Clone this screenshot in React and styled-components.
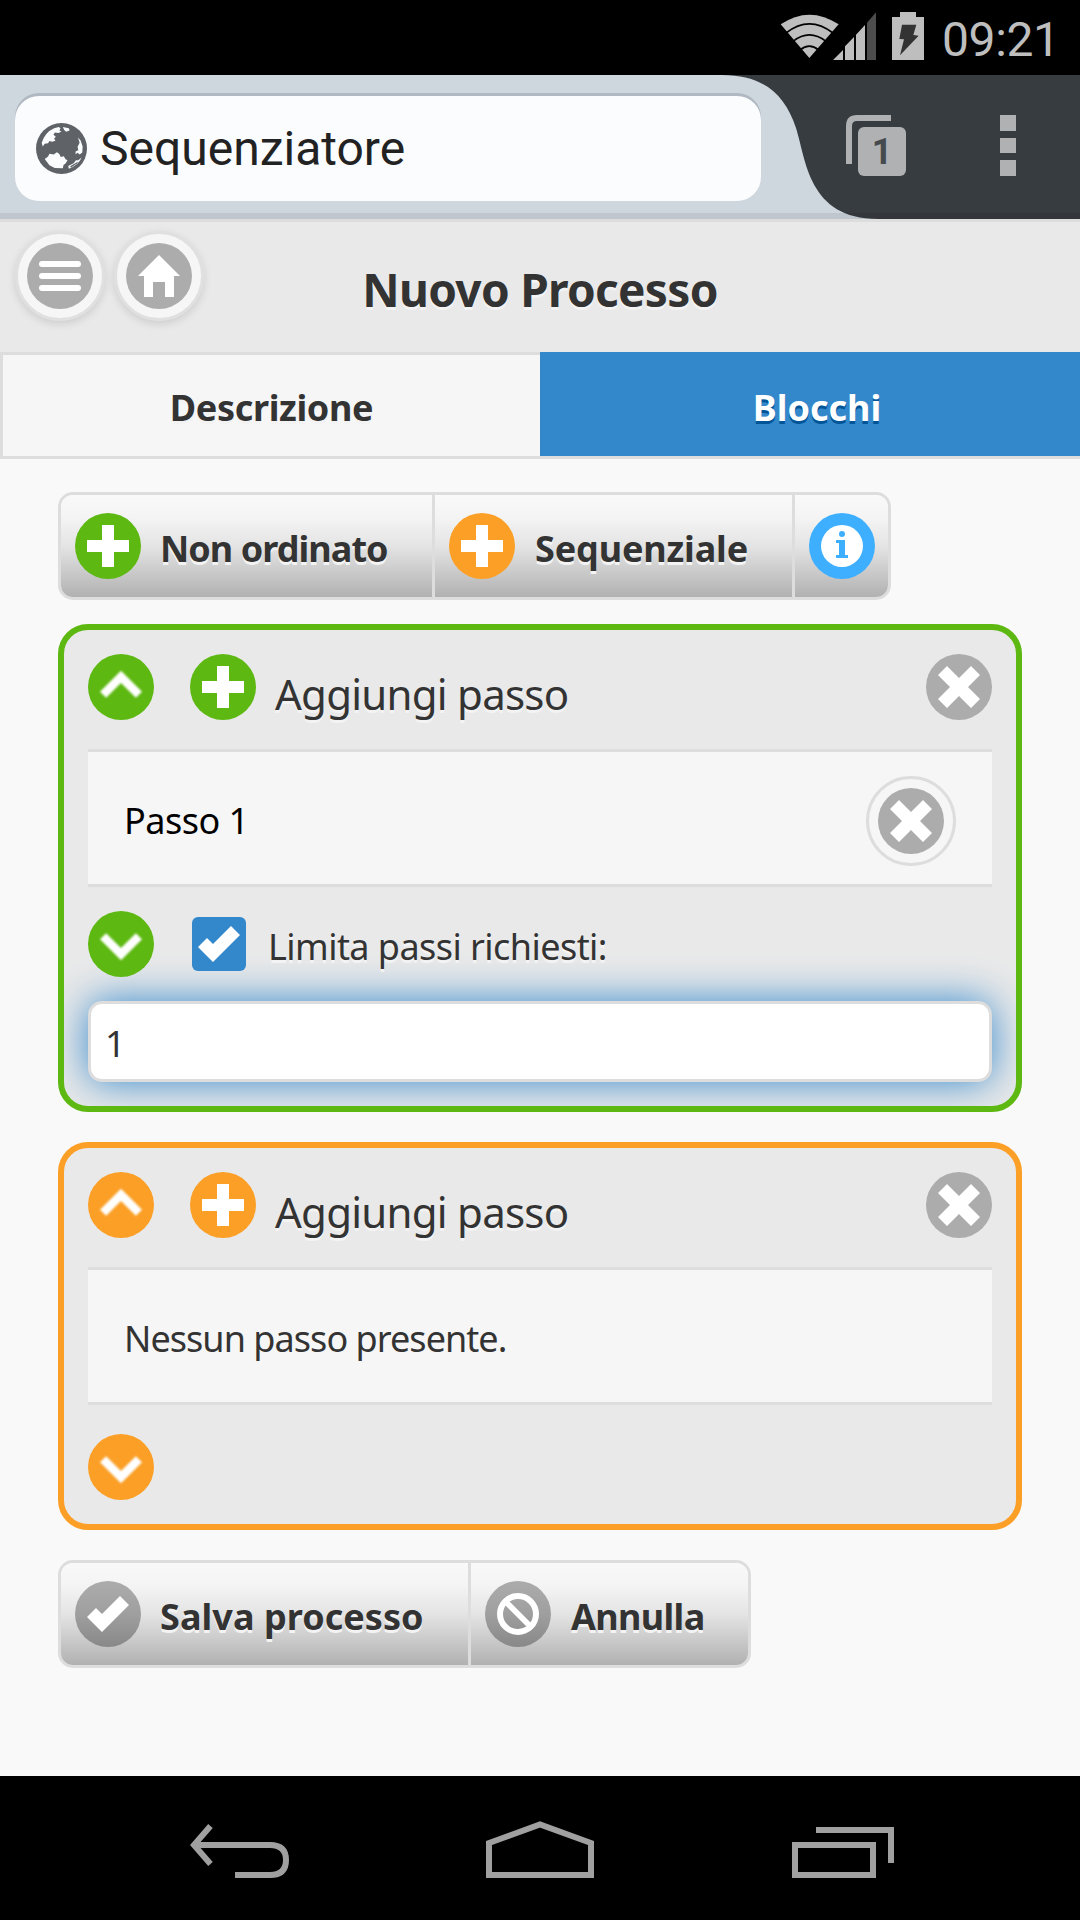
import React, { useState } from "react";
import styled, { createGlobalStyle, css } from "styled-components";

const GREEN = "#5db811";
const ORANGE = "#fb9f26";
const BLUE = "#3388cc";
const GREY = "#acacac";

const GlobalStyle = createGlobalStyle`
  * { box-sizing: border-box; }
  html, body { margin: 0; padding: 0; background: #000; }
  body { font-family: "Noto Sans", "Open Sans", sans-serif; color: #333; }
  button, input { font: inherit; color: inherit; border: 0; margin: 0; padding: 0; background: none; }
`;

const Screen = styled.div`
  width: 1080px;
  height: 1920px;
  display: flex;
  flex-direction: column;
  overflow: hidden;
`;

/* System status bar */
const StatusBar = styled.div`
  height: 75px;
  flex: none;
  background: #000;
  display: flex;
  justify-content: flex-end;
  padding: 12px 25px 0 0;
`;

const Clock = styled.span`
  font: 400 48px/56px Roboto, sans-serif;
  color: #bebebe;
  margin-left: 18px;
  width: 113px;
  white-space: nowrap;
  letter-spacing: -0.4px;
`;

/* Browser chrome */
const BrowserBar = styled.div`
  position: relative;
  height: 144px;
  flex: none;
  background: #373c40;
  display: flex;
  align-items: flex-start;
  padding: 21px 64px 0 15px;
`;

const TabShape = styled.svg`
  position: absolute;
  left: 0;
  top: 0;
`;

const Omnibox = styled.div`
  position: relative;
  width: 746px;
  height: 105px;
  border-radius: 24px;
  background: #fafcfe;
  box-shadow: 0 -3px 0 #b0b8c1;
  display: flex;
  align-items: center;
  padding-left: 21px;
`;

const PageName = styled.span`
  font: 400 48px/56px Roboto, sans-serif;
  color: #222;
  margin: 0 0 0 13px;
`;

const TabSwitcher = styled.div`
  position: relative;
  width: 61px;
  height: 61px;
  margin: 19px 0 0 85px;
  padding: 12px 0 0 12px;
`;

const TabBack = styled.svg`
  position: absolute;
  left: 0;
  top: 0;
`;

const TabCount = styled.div`
  width: 48px;
  height: 49px;
  border-radius: 6px;
  background: #afb1b3;
  color: #454a4f;
  font: 700 36px/50px Roboto, sans-serif;
  text-align: center;
`;

const Overflow = styled.div`
  margin: 19px 0 0 auto;
  display: flex;
  flex-direction: column;
  gap: 7px;
`;

const Dot = styled.i`
  display: block;
  width: 16px;
  height: 15.6px;
  background: #afb1b3;
`;

/* Page header */
const Header = styled.header`
  height: 133px;
  flex: none;
  border-top: 3px solid #ddd;
  background: #e9e9e9;
  display: grid;
  grid-template-columns: 204px 1fr 204px;
`;

const HeaderButtons = styled.div`
  display: flex;
  gap: 9px;
  padding: 9px 0 0 15px;
`;

const RoundButton = styled.button`
  width: 90px;
  height: 90px;
  border-radius: 50%;
  border: 3px solid #ddd;
  background: #f6f6f6;
  display: grid;
  place-items: center;
  flex: none;
  ${(p) => p.$raised && css`
    border-color: #e0e0e0;
    box-shadow: 0 3px 9px rgba(0, 0, 0, 0.12);
  `}
`;

const Title = styled.h1`
  margin: 2px 0 0;
  font-size: 46px;
  line-height: 130px;
  font-weight: 700;
  text-align: center;
  letter-spacing: -0.7px;
  white-space: nowrap;
  text-shadow: 0 3px 0 #f3f3f3;
`;

const Tabs = styled.nav`
  display: grid;
  grid-template-columns: 1fr 1fr;
  height: 107px;
  flex: none;
  border-bottom: 3px solid #ddd;
`;

const Tab = styled.button`
  padding-top: 5px;
  font-size: 36px;
  font-weight: 700;
  line-height: 50px;
  letter-spacing: ${(p) => p.$spacing || "0"};
  background: #f6f6f6;
  border: solid #ddd;
  border-width: 3px 0 0 3px;
  text-shadow: 0 3px 0 #f3f3f3;
  ${(p) => p.$active && css`
    padding-left: 11px;
    background: ${BLUE};
    border-color: ${BLUE};
    color: #fff;
    text-shadow: 0 3px 0 #005599;
  `}
`;

const Main = styled.main`
  flex: 1;
  background: #f9f9f9;
  padding: 33px 58px 0;
`;

/* Joined buttons */
const ButtonGroup = styled.div`
  display: flex;
  width: max-content;
  height: 108px;
  margin-top: ${(p) => p.$gap || 0}px;
  border: 3px solid #ddd;
  border-radius: 15px;
  overflow: hidden;
`;

const GroupButton = styled.button`
  width: ${(p) => p.$width}px;
  display: flex;
  align-items: center;
  padding-left: 14px;
  font-size: 36px;
  font-weight: 700;
  line-height: 50px;
  letter-spacing: ${(p) => p.$spacing || "0"};
  white-space: nowrap;
  text-shadow: 0 3px 0 #f3f3f3;
  background: linear-gradient(#f9f9f9 0%, #f4f4f4 22%, #e4e4e4 50%, #b1b1b1 100%);
  & + & { border-left: 3px solid #ddd; }
`;

const GroupLabel = styled.span`
  margin: 5px 0 0 ${(p) => p.$gap || 19}px;
`;

const Disc = styled.span`
  width: 66px;
  height: 66px;
  flex: none;
  border-radius: 50%;
  background: ${(p) => p.$color};
  display: grid;
  place-items: center;
`;

const Glyph = styled.svg`
  display: block;
  overflow: visible;
  fill: #fff;
  filter: ${(p) => (p.$soft ? "blur(0.8px)" : "none")};
`;

/* Process block */
const Block = styled.section`
  border: 6px solid ${(p) => p.$color};
  border-radius: 30px;
  background: #e9e9e9;
  padding: 24px;
  margin-top: ${(p) => p.$gap}px;
  height: ${(p) => p.$height}px;
  overflow: hidden;
`;

const BlockRow = styled.div`
  height: 66px;
  display: flex;
  align-items: center;
`;

const AddStep = styled.button`
  display: flex;
  align-items: center;
  margin-left: 36px;
  font-size: 42px;
  line-height: 56px;
  text-shadow: 0 3px 0 #f3f3f3;
`;

const AddLabel = styled.span`
  margin: 13px 0 0 19px;
  letter-spacing: -0.75px;
  white-space: nowrap;
`;

const Push = styled.span`
  margin-left: auto;
`;

const Steps = styled.div`
  height: 138px;
  margin: 29px 0 ${(p) => p.$after}px;
  padding: 5px 36px 0;
  border: solid #ddd;
  border-width: 3px 0;
  background: #f6f6f6;
  display: flex;
  align-items: center;
  justify-content: space-between;
  font-size: 36px;
  line-height: 50px;
  color: ${(p) => p.$ink};
  letter-spacing: ${(p) => p.$spacing};
`;

const Checkbox = styled.button`
  width: 54px;
  height: 54px;
  margin-left: 38px;
  border-radius: 6px;
  background: ${(p) => (p.$on ? BLUE : "#f6f6f6")};
  display: grid;
  place-items: center;
`;

const LimitLabel = styled.span`
  margin: 5px 0 0 22px;
  font-size: 36px;
  line-height: 50px;
  letter-spacing: -0.55px;
  text-shadow: 0 3px 0 #f3f3f3;
`;

const LimitInput = styled.input`
  display: block;
  width: 904px;
  height: 81px;
  margin-top: 24px;
  padding: 3px 14px 0;
  border: 3px solid #ddd;
  border-radius: 14px;
  background: #fff;
  font-size: 36px;
  outline: none;
  box-shadow: 0 0 40px ${BLUE};
`;

/* System navigation bar */
const NavBar = styled.footer`
  height: 144px;
  flex: none;
  background: #000;
  display: flex;
  padding: 45px 0 0 190px;
`;

const NavIcon = styled.svg`
  fill: none;
  stroke: #a0a0a0;
  stroke-width: 6;
  margin-left: ${(p) => p.$gap || 0}px;
`;

const shapes = {
  plus: <polygon points="14,5 9,5 9,0 5,0 5,5 0,5 0,9 5,9 5,14 9,14 9,9 14,9" />,
  remove: <polygon points="14,3 11,0 7,4 3,0 0,3 4,7 0,11 3,14 7,10 11,14 14,11 10,7" />,
  check: <polygon points="14,4 11,1 5,7 3,5 0,8 5,13" />,
  home: <polygon points="7,0 0,7 2,7 2,14 5,14 5,9 9,9 9,14 12,14 12,7 14,7" />,
  up: <polygon points="2.05,10.6 7,5.65 11.95,10.6 14,8.55 7,1.55 0,8.55" />,
  down: <polygon points="11.95,3.4 7,8.35 2.05,3.4 0,5.45 7,12.45 14,5.45" />,
  bars: (
    <>
      <rect y="2" width="14" height="2" rx="1" />
      <rect y="6" width="14" height="2" rx="1" />
      <rect y="10" width="14" height="2" rx="1" />
    </>
  ),
  info: (
    <>
      <circle cx="7" cy="7" r="7" />
      <g fill="#3eafff">
        <circle cx="7" cy="3" r="1" />
        <polygon points="5,5 8,5 8,10 9,10 9,11 5,11 5,10 6,10 6,6 5,6" />
      </g>
    </>
  ),
  forbidden: (
    <g fill="none" stroke="#fff" strokeWidth="2">
      <circle cx="7" cy="7" r="6" />
      <path d="M3 3L11 11" strokeWidth="1.9" />
    </g>
  ),
};

const Icon = ({ name }) => (
  <Glyph width="42" height="42" viewBox="0 0 14 14" $soft={name === "up" || name === "down"}>
    {shapes[name]}
  </Glyph>
);

const DiscIcon = ({ name, color = GREY }) => (
  <Disc $color={color}>
    <Icon name={name} />
  </Disc>
);

const StatusIcons = () => (
  <svg width="144" height="48" viewBox="180 36 432 144" fill="#bebebe">
    <path d="M182 73Q268 15 356 73L268 174Z" />
    <g fill="none" stroke="#000" strokeWidth="5">
      <path d="M198 99Q268 44 339 99" />
      <path d="M219 124Q268 85 318 124" />
      <path d="M240 150Q268 127 296 150" />
    </g>
    <path d="M339 180L369 150V180ZM375 180V139L402 111V180ZM408 180V104L435 75V180Z" />
    <path d="M441 180V68L468 37V180Z" fill="#4d4d4d" />
    <path d="M516 51H540V36H588V51H612V180H516Z" />
    <path d="M546 74H589L580 105L596 107L540 166L552 118L538 117Z" fill="#333" />
  </svg>
);

const Globe = () => (
  <svg width="51" height="51" viewBox="110 155 152 152">
    <circle cx="186" cy="231" r="76" fill="#5f6368" />
    <g fill="#fafcfe">
      <path d="M127 214Q138 182 164 171L178 167L183 171L180 177L186 181L176 185L166 183L162 190L169 196L164 202L168 208L158 211L150 209L146 215L136 217L130 225Z" />
      <path d="M136 262L146 255L150 247L163 249L172 242L179 247L184 256L193 254L198 263L204 266L198 276L192 280L190 290L166 289L150 281Z" />
      <path d="M190 167L208 171L210 177L200 181L194 176Z" />
      <path d="M235 198L243 207L249 225L248 243L240 249L234 244L228 248L228 240L236 236L234 226L240 214Z" />
      <path d="M208 291Q236 282 246 258L236 266L229 266L222 275L206 283Z" />
    </g>
    <g fill="#5f6368">
      <circle cx="185" cy="245" r="4" />
      <path d="M212 284L236 270L232 276L214 288Z" />
    </g>
  </svg>
);

function ProcessBlock({ color, gap, height, after, ink, spacing, children, footer }) {
  return (
    <Block $color={color} $gap={gap} $height={height}>
      <BlockRow>
        <DiscIcon name="up" color={color} />
        <AddStep>
          <DiscIcon name="plus" color={color} />
          <AddLabel>Aggiungi passo</AddLabel>
        </AddStep>
        <Push>
          <DiscIcon name="remove" />
        </Push>
      </BlockRow>
      <Steps $after={after} $ink={ink} $spacing={spacing}>{children}</Steps>
      {footer}
    </Block>
  );
}

export default function App() {
  const [limited, setLimited] = useState(true);
  const [limit, setLimit] = useState("1");

  return (
    <Screen>
      <GlobalStyle />
      <StatusBar>
        <StatusIcons />
        <Clock>09:21</Clock>
      </StatusBar>

      <BrowserBar>
        <TabShape width="1080" height="144" viewBox="0 0 1080 144">
          <path d="M0 0H722C764 0 785 20 796 53C806 84 808 144 878 144H0Z" fill="#ced6de" />
          <rect y="138" width="1080" height="6" fill="#000" opacity="0.07" />
        </TabShape>
        <Omnibox>
          <Globe />
          <PageName>Sequenziatore</PageName>
        </Omnibox>
        <TabSwitcher>
          <TabBack width="46" height="50" viewBox="0 0 46 50">
            <path d="M3 49V11Q3 3 11 3H45" fill="none" stroke="#afb1b3" strokeWidth="6" />
          </TabBack>
          <TabCount>1</TabCount>
        </TabSwitcher>
        <Overflow>
          <Dot />
          <Dot />
          <Dot />
        </Overflow>
      </BrowserBar>

      <Header>
        <HeaderButtons>
          <RoundButton $raised><DiscIcon name="bars" /></RoundButton>
          <RoundButton $raised><DiscIcon name="home" /></RoundButton>
        </HeaderButtons>
        <Title>Nuovo Processo</Title>
      </Header>
      <Tabs>
        <Tab $spacing="-0.35px">Descrizione</Tab>
        <Tab $active $spacing="0px">Blocchi</Tab>
      </Tabs>

      <Main>
        <ButtonGroup>
          <GroupButton $width={371} $spacing="-0.95px">
            <DiscIcon name="plus" color={GREEN} />
            <GroupLabel>Non ordinato</GroupLabel>
          </GroupButton>
          <GroupButton $width={360} $spacing="-0.15px">
            <DiscIcon name="plus" color={ORANGE} />
            <GroupLabel $gap={20}>Sequenziale</GroupLabel>
          </GroupButton>
          <GroupButton $width={96}>
            <DiscIcon name="info" color="#3eafff" />
          </GroupButton>
        </ButtonGroup>

        <ProcessBlock
          color={GREEN}
          gap={24}
          height={488}
          after={24}
          ink="#000"
          spacing="-0.5px"
          footer={
            <>
              <BlockRow>
                <DiscIcon name="down" color={GREEN} />
                <Checkbox $on={limited} onClick={() => setLimited(!limited)}>
                  {limited && <Icon name="check" />}
                </Checkbox>
                <LimitLabel>Limita passi richiesti:</LimitLabel>
              </BlockRow>
              <LimitInput value={limit} onChange={(e) => setLimit(e.target.value)} />
            </>
          }
        >
          Passo 1
          <RoundButton><DiscIcon name="remove" /></RoundButton>
        </ProcessBlock>

        <ProcessBlock
          color={ORANGE}
          gap={30}
          height={388}
          after={29}
          ink="#333"
          spacing="-0.95px"
          footer={
            <BlockRow>
              <DiscIcon name="down" color={ORANGE} />
            </BlockRow>
          }
        >
          Nessun passo presente.
        </ProcessBlock>

        <ButtonGroup $gap={30}>
          <GroupButton $width={407} $spacing="0.05px">
            <DiscIcon name="check" color="rgba(0,0,0,0.3)" />
            <GroupLabel>Salva processo</GroupLabel>
          </GroupButton>
          <GroupButton $width={280} $spacing="-0.65px">
            <DiscIcon name="forbidden" color="rgba(0,0,0,0.3)" />
            <GroupLabel $gap={20}>Annulla</GroupLabel>
          </GroupButton>
        </ButtonGroup>
      </Main>

      <NavBar>
        <NavIcon width="100" height="57" viewBox="0 0 100 57">
          <path d="M20.5 5L4 24L20.5 43" />
          <path d="M5 24H80Q96 24 96 39Q96 54 80 54H45" />
        </NavIcon>
        <NavIcon $gap={196} width="108" height="57" viewBox="0 0 108 57">
          <path d="M3 54V22L54 3.5L105 22V54Z" />
        </NavIcon>
        <NavIcon $gap={198} width="102" height="57" viewBox="0 0 102 57">
          <path d="M3 24H81V54H3ZM24 9H99V42" />
        </NavIcon>
      </NavBar>
    </Screen>
  );
}
